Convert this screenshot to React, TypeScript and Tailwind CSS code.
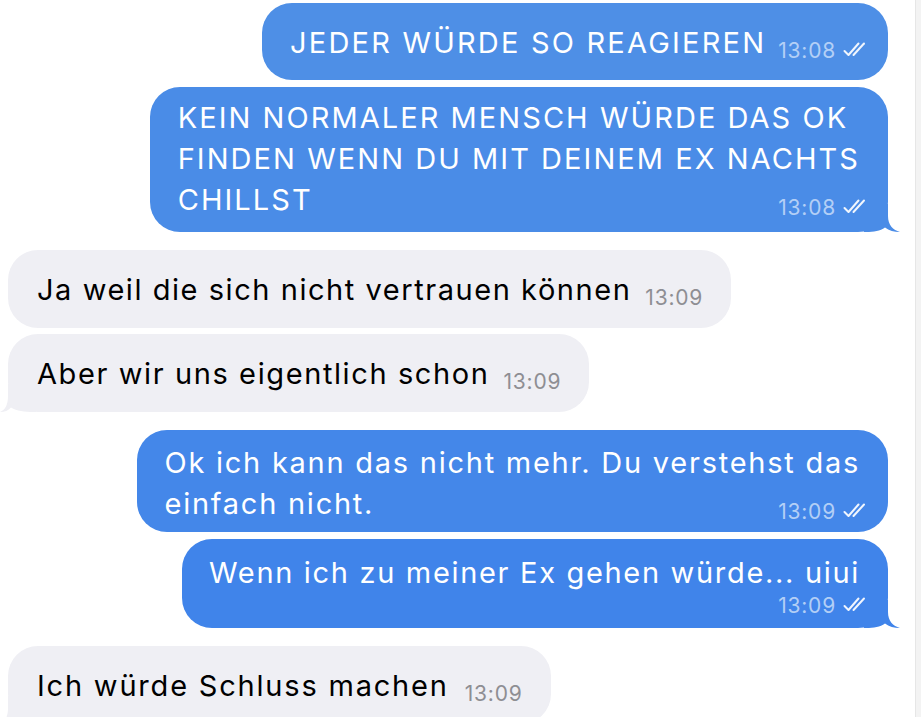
import React from "react";

const FONT = { fontFamily: "Inter, 'Noto Sans', 'Liberation Sans', sans-serif" };

function Checks() {
  return (
    <svg width="25" height="15" viewBox="0 0 25 15" fill="none" className="mb-[6px]">
      <path d="M1.5 9 L5.5 13 L15.5 1.5" stroke="white" strokeOpacity="0.92" strokeWidth="2" strokeLinecap="round" strokeLinejoin="round" />
      <path d="M10.5 13 L21 1.5" stroke="white" strokeOpacity="0.92" strokeWidth="2" strokeLinecap="round" strokeLinejoin="round" />
    </svg>
  );
}

function Meta({ time, out }: { time: string; out?: boolean }) {
  return (
    <span className="flex items-end gap-[7px] shrink-0 self-end leading-[25px] tracking-[0.8px]">
      <span className={out ? "text-[21px] text-[#b3cff6]" : "text-[21px] text-[#8e8e93]"}>{time}</span>
      {out && <Checks />}
    </span>
  );
}

function TailOut({ color }: { color: string }) {
  return (
    <svg className="absolute right-[-12px] bottom-0" width="36" height="28" viewBox="0 0 36 28">
      <path d="M24 0 L24 12 C24 21 29 26 36 28 C30 28 25 26.5 21 23.5 C16 27 10 28 2 28 L0 28 L0 0 Z" fill={color} />
    </svg>
  );
}

function TailIn({ color }: { color: string }) {
  return (
    <svg className="absolute left-[-8px] bottom-0 -scale-x-100" width="36" height="28" viewBox="0 0 36 28">
      <path d="M28 0 L28 12 C28 21 31 26 36 28 C31 28 28 26.5 25 23.5 C19 27 12 28 2 28 L0 28 L0 0 Z" fill={color} />
    </svg>
  );
}

export default function App() {
  return (
    <div className="w-[921px] h-[717px] overflow-hidden bg-white flex" style={FONT}>
      <div className="flex-1 flex flex-col pt-[3px]">
        {/* 1 */}
        <div className="flex justify-end pr-[27px]">
          <div className="relative bg-[#4e8fe6] rounded-[30px] pl-[28px] pr-[20px] pt-[19px] pb-[17px] flex items-end gap-[12px] text-white text-[29px] leading-[41px]">
            <span className="tracking-[2.2px]">JEDER WÜRDE SO REAGIEREN</span>
            <Meta time="13:08" out />
          </div>
        </div>
        {/* 2 */}
        <div className="flex justify-end pr-[27px] mt-[7px]">
          <div className="relative bg-[#4a8ce7] rounded-[30px] pl-[28px] pr-[20px] pt-[10px] pb-[12px] flex flex-col text-white text-[29px] leading-[41px]">
            <div className="pr-[8px] tracking-[2.05px]">KEIN NORMALER MENSCH WÜRDE DAS OK</div>
            <div className="pr-[8px] tracking-[2.05px]">FINDEN WENN DU MIT DEINEM EX NACHTS</div>
            <div className="flex items-end justify-between">
              <span className="tracking-[2.05px]">CHILLST</span>
              <Meta time="13:08" out />
            </div>
            <TailOut color="#4a8ce7" />
          </div>
        </div>
        {/* 3 */}
        <div className="flex justify-start pl-[8px] mt-[18px]">
          <div className="relative bg-[#efeff4] rounded-[30px] pl-[29px] pr-[28px] pt-[19px] pb-[18px] flex items-end gap-[14px] text-black text-[29px] leading-[41px]">
            <span className="tracking-[1.55px]">Ja weil die sich nicht vertrauen können</span>
            <Meta time="13:09" />
          </div>
        </div>
        {/* 4 */}
        <div className="flex justify-start pl-[8px] mt-[6px]">
          <div className="relative bg-[#efeff4] rounded-[30px] pl-[29px] pr-[28px] pt-[19px] pb-[18px] flex items-end gap-[14px] text-black text-[29px] leading-[41px]">
            <span className="tracking-[1.6px]">Aber wir uns eigentlich schon</span>
            <Meta time="13:09" />
            <TailIn color="#efeff4" />
          </div>
        </div>
        {/* 5 */}
        <div className="flex justify-end pr-[27px] mt-[18px]">
          <div className="relative bg-[#4487e9] rounded-[30px] pl-[27px] pr-[20px] pt-[12px] pb-[8px] flex flex-col text-white text-[29px] leading-[41px]">
            <div className="pr-[8px] tracking-[1.75px]">Ok ich kann das nicht mehr. Du verstehst das</div>
            <div className="flex items-end justify-between">
              <span className="tracking-[1.75px]">einfach nicht.</span>
              <Meta time="13:09" out />
            </div>
          </div>
        </div>
        {/* 6 */}
        <div className="flex justify-end pr-[27px] mt-[7px]">
          <div className="relative bg-[#4084ea] rounded-[30px] pl-[27px] pr-[20px] pt-[13px] pb-[10px] flex flex-col text-white text-[29px] leading-[41px]">
            <div className="pr-[8px] tracking-[1.68px]">Wenn ich zu meiner Ex gehen würde... uiui</div>
            <div className="flex justify-end h-[25px]">
              <Meta time="13:09" out />
            </div>
            <TailOut color="#4084ea" />
          </div>
        </div>
        {/* 7 */}
        <div className="flex justify-start pl-[8px] mt-[18px]">
          <div className="relative bg-[#efeff4] rounded-[30px] pl-[29px] pr-[28px] pt-[19px] pb-[18px] flex items-end gap-[16px] text-black text-[29px] leading-[41px]">
            <span className="tracking-[1.8px]">Ich würde Schluss machen</span>
            <Meta time="13:09" />
            <TailIn color="#efeff4" />
          </div>
        </div>
      </div>
      <div className="w-[6px] h-full bg-[#f3f3f3] border-l border-[#e6e6e6]" />
    </div>
  );
}
